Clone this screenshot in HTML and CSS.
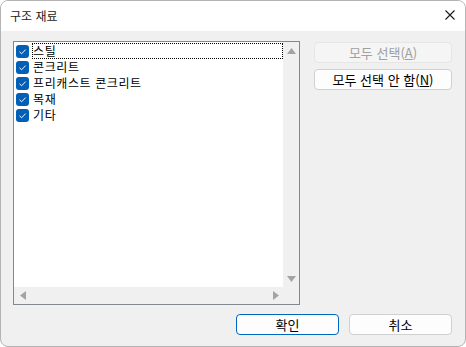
FILE: index.html
```html
<!DOCTYPE html>
<html lang="ko">
<head>
<meta charset="utf-8">
<link rel="stylesheet" href="styles.css">
</head>
<body>
<div class="window">
  <div class="titlebar">
    <span class="title">구조 재료</span>
    <svg class="close" width="12" height="12" viewBox="0 0 12 12"><path d="M1.5 1.5 L10.5 10.5 M10.5 1.5 L1.5 10.5" stroke="#1a1a1a" stroke-width="1.1" fill="none"/></svg>
  </div>
  <div class="content">
    <div class="main">
      <div class="listbox">
        <div class="list-area">
          <ul class="items">
            <li class="item"><span class="cb"><svg width="13" height="13" viewBox="0 0 13 13"><path d="M3.5 6.8 L5.6 8.8 L9.6 4.6" stroke="#fff" stroke-width="1" fill="none"/></svg></span><span class="label focus">스틸</span></li>
            <li class="item"><span class="cb"><svg width="13" height="13" viewBox="0 0 13 13"><path d="M3.5 6.8 L5.6 8.8 L9.6 4.6" stroke="#fff" stroke-width="1" fill="none"/></svg></span><span class="label">콘크리트</span></li>
            <li class="item"><span class="cb"><svg width="13" height="13" viewBox="0 0 13 13"><path d="M3.5 6.8 L5.6 8.8 L9.6 4.6" stroke="#fff" stroke-width="1" fill="none"/></svg></span><span class="label">프리캐스트 콘크리트</span></li>
            <li class="item"><span class="cb"><svg width="13" height="13" viewBox="0 0 13 13"><path d="M3.5 6.8 L5.6 8.8 L9.6 4.6" stroke="#fff" stroke-width="1" fill="none"/></svg></span><span class="label">목재</span></li>
            <li class="item"><span class="cb"><svg width="13" height="13" viewBox="0 0 13 13"><path d="M3.5 6.8 L5.6 8.8 L9.6 4.6" stroke="#fff" stroke-width="1" fill="none"/></svg></span><span class="label">기타</span></li>
          </ul>
          <div class="vscroll">
            <svg width="9" height="6" viewBox="0 0 9 6"><path d="M4.5 0 L9 6 L0 6 Z" fill="#a3a3a3"/></svg>
            <svg width="9" height="6" viewBox="0 0 9 6"><path d="M0 0 L9 0 L4.5 6 Z" fill="#a3a3a3"/></svg>
          </div>
        </div>
        <div class="hscroll">
          <div class="hbar">
            <svg width="6" height="9" viewBox="0 0 6 9"><path d="M6 0 L6 9 L0 4.5 Z" fill="#a3a3a3"/></svg>
            <svg width="6" height="9" viewBox="0 0 6 9"><path d="M0 0 L6 4.5 L0 9 Z" fill="#a3a3a3"/></svg>
          </div>
          <div class="corner"></div>
        </div>
      </div>
      <div class="side">
        <button class="btn disabled">모두 선택(<u>A</u>)</button>
        <button class="btn">모두 선택 안 함(<u>N</u>)</button>
      </div>
    </div>
    <div class="footer">
      <button class="btn primary">확인</button>
      <button class="btn">취소</button>
    </div>
  </div>
</div>
</body>
</html>
```

FILE: styles.css
```css
* { box-sizing: border-box; }
html, body { margin: 0; padding: 0; background: #ffffff; }
body {
  font-family: "Noto Sans CJK KR", "Noto Sans", sans-serif;
  font-size: 12px;
  color: #000;
}
.window {
  width: 466px;
  height: 347px;
  border: 1px solid #b4b4b4;
  border-radius: 8px;
  overflow: hidden;
  background: #f0f0f0;
  display: flex;
  flex-direction: column;
}
.titlebar {
  height: 30px;
  background: #ffffff;
  display: flex;
  align-items: center;
  justify-content: space-between;
  padding: 0 9px 0 9px;
  flex: none;
}
.title { font-size: 12px; line-height: 16px; color: #1a1a1a; }
.close { margin-top: -2px; }
.content {
  flex: 1;
  padding: 10px 13px 0 12px;
  display: flex;
  flex-direction: column;
}
.main { display: flex; gap: 14px; }
.listbox {
  width: 287px;
  height: 264px;
  border: 1px solid #828790;
  display: flex;
  flex-direction: column;
  background: #fff;
}
.list-area { flex: 1; display: flex; min-height: 0; }
.items {
  list-style: none;
  margin: 0;
  padding: 1px 0 0 2px;
  flex: 1;
  background: #fff;
}
.item {
  height: 16px;
  display: flex;
  align-items: center;
}
.cb {
  width: 13px;
  height: 13px;
  border-radius: 3px;
  background: #005fb8;
  display: flex;
  flex: none;
}
.label {
  margin-left: 3px;
  height: 16px;
  font-size: 12px;
  letter-spacing: 0.6px;
  line-height: 15px;
  padding-left: 1px;
  white-space: nowrap;
}
.label.focus {
  flex: 1;
  outline: 1px dotted #000;
  outline-offset: -1px;
}
.vscroll {
  width: 16px;
  background: #f0f0f0;
  display: flex;
  flex-direction: column;
  justify-content: space-between;
  align-items: center;
  padding: 6px 0 5px 1px;
}
.hscroll { height: 17px; display: flex; flex: none; }
.hbar {
  flex: 1;
  background: #f0f0f0;
  display: flex;
  justify-content: space-between;
  align-items: center;
  padding: 0 4px 1px 6px;
}
.corner { width: 16px; background: #f0f0f0; }
.side {
  display: flex;
  flex-direction: column;
  gap: 6px;
  padding-top: 1px;
}
.btn {
  font-family: inherit;
  font-size: 13px;
  height: 21px;
  width: 138px;
  padding: 0;
  line-height: 18px;
  border: 1px solid #d0d0d0;
  border-radius: 4px;
  background: #fdfdfd;
  color: #000;
}
.btn.disabled {
  color: #a0a0a0;
  background: #f5f5f5;
  border-color: #e6e6e6;
}
.footer {
  display: flex;
  justify-content: flex-end;
  gap: 10px;
  margin-top: 9px;
}
.footer .btn { width: 103px; }
.btn.primary { border-color: #0067c0; }
```
